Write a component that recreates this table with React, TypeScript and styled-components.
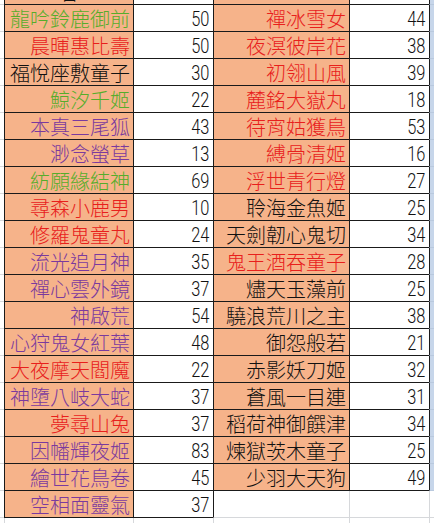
import React from 'react';
import styled, { createGlobalStyle } from 'styled-components';

type Tone = 'green' | 'red' | 'black' | 'purple';

interface Entry {
  name: string;
  count: number;
  tone: Tone;
}

const toneColors: Record<Tone, string> = {
  green: '#55ad2b',
  red: '#e8201c',
  black: '#111111',
  purple: '#7a3a9e',
};

const leftList: Entry[] = [
  { name: '龍吟鈴鹿御前', count: 50, tone: 'green' },
  { name: '晨暉惠比壽', count: 50, tone: 'red' },
  { name: '福悅座敷童子', count: 30, tone: 'black' },
  { name: '鯨汐千姬', count: 22, tone: 'green' },
  { name: '本真三尾狐', count: 43, tone: 'purple' },
  { name: '渺念螢草', count: 13, tone: 'purple' },
  { name: '紡願緣結神', count: 69, tone: 'green' },
  { name: '尋森小鹿男', count: 10, tone: 'red' },
  { name: '修羅鬼童丸', count: 24, tone: 'red' },
  { name: '流光追月神', count: 35, tone: 'purple' },
  { name: '禪心雲外鏡', count: 37, tone: 'purple' },
  { name: '神啟荒', count: 54, tone: 'purple' },
  { name: '心狩鬼女紅葉', count: 48, tone: 'purple' },
  { name: '大夜摩天閻魔', count: 22, tone: 'red' },
  { name: '神墮八岐大蛇', count: 37, tone: 'purple' },
  { name: '夢尋山兔', count: 37, tone: 'red' },
  { name: '因幡輝夜姬', count: 83, tone: 'purple' },
  { name: '繪世花鳥卷', count: 45, tone: 'purple' },
  { name: '空相面靈氣', count: 37, tone: 'purple' },
];

const rightList: Entry[] = [
  { name: '禪冰雪女', count: 44, tone: 'red' },
  { name: '夜溟彼岸花', count: 38, tone: 'red' },
  { name: '初翎山風', count: 39, tone: 'red' },
  { name: '麓銘大嶽丸', count: 18, tone: 'red' },
  { name: '待宵姑獲鳥', count: 53, tone: 'red' },
  { name: '縛骨清姬', count: 16, tone: 'red' },
  { name: '浮世青行燈', count: 27, tone: 'red' },
  { name: '聆海金魚姬', count: 25, tone: 'black' },
  { name: '天劍韌心鬼切', count: 34, tone: 'black' },
  { name: '鬼王酒吞童子', count: 28, tone: 'red' },
  { name: '燼天玉藻前', count: 25, tone: 'black' },
  { name: '驍浪荒川之主', count: 38, tone: 'black' },
  { name: '御怨般若', count: 21, tone: 'black' },
  { name: '赤影妖刀姬', count: 32, tone: 'black' },
  { name: '蒼風一目連', count: 31, tone: 'black' },
  { name: '稻荷神御饌津', count: 34, tone: 'black' },
  { name: '煉獄茨木童子', count: 25, tone: 'black' },
  { name: '少羽大天狗', count: 49, tone: 'black' },
];

const GRID_DARK = '#1a1a1a';
const GRID_LIGHT = '#d6d8db';

const GlobalStyle = createGlobalStyle`
  html, body {
    margin: 0;
    padding: 0;
    background: #ffffff;
    overflow: hidden;
  }
`;

const Sheet = styled.div`
  display: flex;
  flex-direction: column;
  margin-top: -22px;
`;

const Row = styled.div`
  display: grid;
  grid-template-columns: 4px 129px 80px 136px 80px 1fr;
  height: 27px;
`;

const Gutter = styled.div`
  border-bottom: 1px solid ${GRID_LIGHT};
`;

const NameCell = styled.div<{ $tone: Tone; $align?: 'right' | 'center' }>`
  box-sizing: border-box;
  display: flex;
  align-items: center;
  justify-content: ${p => (p.$align === 'center' ? 'center' : 'flex-end')};
  padding: 1px 3px 0 0;
  background: #f6b38a;
  border-left: 1px solid ${GRID_DARK};
  border-bottom: 1px solid ${GRID_DARK};
  color: ${p => toneColors[p.$tone]};
  font-family: "Noto Sans CJK TC", "Noto Sans CJK SC", sans-serif;
  font-weight: 300;
  font-size: 20px;
  line-height: 1;
  white-space: nowrap;
  overflow: hidden;
`;

const NumCell = styled.div`
  box-sizing: border-box;
  display: flex;
  align-items: center;
  justify-content: flex-end;
  padding: 2px 4px 0 0;
  background: #ffffff;
  border-left: 1px solid ${GRID_DARK};
  border-bottom: 1px solid ${GRID_DARK};
  color: #111111;
  font-family: Roboto, "Liberation Sans", Arial, sans-serif;
  font-weight: 300;
  font-size: 21px;
  line-height: 1;
`;

const Digits = styled.span`
  display: inline-block;
  transform: scaleX(0.78);
  transform-origin: right center;
`;

const BlankCell = styled.div<{ $edge: 'dark' | 'light'; $base: 'dark' | 'light'; $fill?: string }>`
  box-sizing: border-box;
  background: ${p => p.$fill ?? '#ffffff'};
  border-left: 1px solid ${p => (p.$edge === 'dark' ? GRID_DARK : GRID_LIGHT)};
  border-bottom: 1px solid ${p => (p.$base === 'dark' ? GRID_DARK : GRID_LIGHT)};
`;

const Strip = styled.div<{ $active: boolean }>`
  box-sizing: border-box;
  background: ${p => (p.$active ? '#c7d6ea' : '#ffffff')};
  border-left: 1px solid ${p => (p.$active ? GRID_DARK : GRID_LIGHT)};
  border-bottom: 1px solid ${p => (p.$active ? '#b9c9de' : GRID_LIGHT)};
`;

export default function App() {
  const rowCount = Math.max(leftList.length, rightList.length);

  return (
    <>
      <GlobalStyle />
      <Sheet>
        {/* partly scrolled-off row above the list */}
        <Row>
          <Gutter />
          <NameCell $tone="black" $align="center">名</NameCell>
          <BlankCell $edge="dark" $base="dark" />
          <BlankCell $edge="dark" $base="dark" $fill="#f6b38a" />
          <BlankCell $edge="dark" $base="dark" />
          <Strip $active />
        </Row>

        {Array.from({ length: rowCount }).map((_, i) => {
          const left = leftList[i];
          const right = rightList[i];
          return (
            <Row key={i}>
              <Gutter />
              {left ? (
                <>
                  <NameCell $tone={left.tone}>{left.name}</NameCell>
                  <NumCell><Digits>{left.count}</Digits></NumCell>
                </>
              ) : (
                <>
                  <BlankCell $edge="light" $base="light" />
                  <BlankCell $edge="light" $base="light" />
                </>
              )}
              {right ? (
                <>
                  <NameCell $tone={right.tone}>{right.name}</NameCell>
                  <NumCell><Digits>{right.count}</Digits></NumCell>
                </>
              ) : (
                <>
                  <BlankCell $edge={left ? 'dark' : 'light'} $base="light" />
                  <BlankCell $edge="light" $base="light" />
                </>
              )}
              <Strip $active={!!right} />
            </Row>
          );
        })}

        <Row>
          <Gutter />
          <BlankCell $edge="light" $base="light" />
          <BlankCell $edge="light" $base="light" />
          <BlankCell $edge="light" $base="light" />
          <BlankCell $edge="light" $base="light" />
          <Strip $active={false} />
        </Row>
      </Sheet>
    </>
  );
}
